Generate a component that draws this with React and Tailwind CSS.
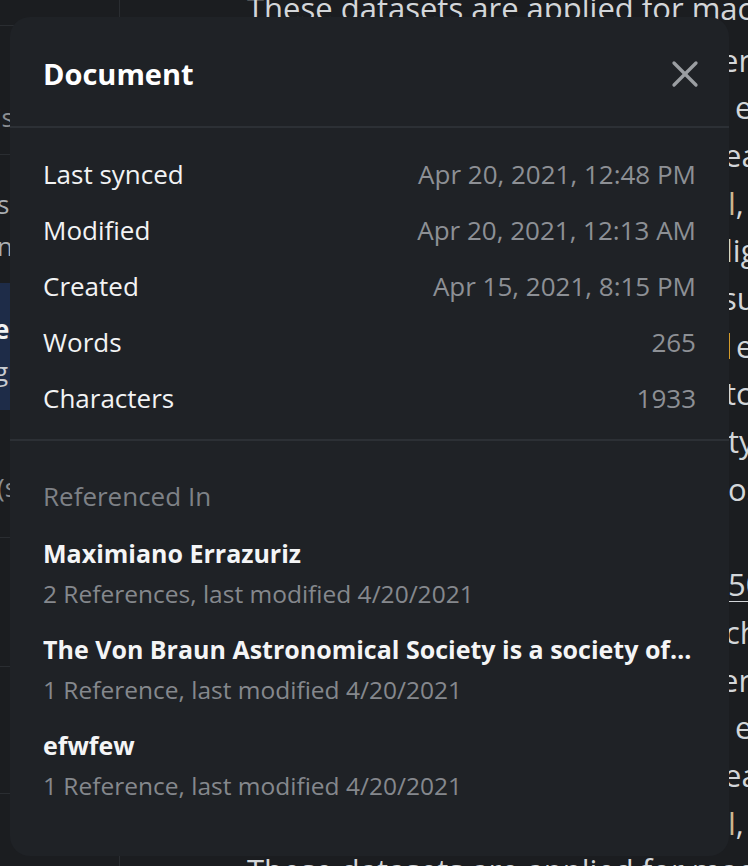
import { X } from "lucide-react";

// editor lines behind the modal: [hidden part, part that peeks out at the right edge, hidden width]
const editorLines = [
  ["learning research and have be", "en cited", 474],
  ["in peer-reviewed academic journals", " e", 480],
  ["are often described in the res", "earch", 477],
  ["<l>", "", 481],
  ["as benchmark results and are high", "light", 478],
  ["to show how the models and mea", "sures", 475],
  ["<bar>", "", 481],
  ["of the results of the community, e", "tc.", 478],
  ["with the goal to see the quali", "ty of", 481],
  ["research and also to look at the c", "ost", 481],
  ["", "", 481],
  ["<link>", "", 481],
  ["These datasets are applied for ma", "chine", 478],
  ["learning research and have be", "en cited", 474],
  ["in peer-reviewed academic journals", " e", 480],
  ["are often described in the res", "earch", 477],
  ["<l>", "", 481],
];

const rows = [
  ["Last synced", "Apr 20, 2021, 12:48 PM"],
  ["Modified", "Apr 20, 2021, 12:13 AM"],
  ["Created", "Apr 15, 2021, 8:15 PM"],
  ["Words", "265"],
  ["Characters", "1933"],
];

const references = [
  { title: "Maximiano Errazuriz", meta: "2 References, last modified 4/20/2021" },
  {
    title: "The Von Braun Astronomical Society is a society of amateur astronomers",
    meta: "1 Reference, last modified 4/20/2021",
  },
  { title: "efwfew", meta: "1 Reference, last modified 4/20/2021" },
];

function EditorLine({ hidden, tail, width }) {
  let end = <span className="whitespace-pre">{tail}</span>;
  if (hidden === "<l>") {
    hidden = "datasets for the study of the mode";
    end = (
      <span>
        <span className="text-[#cdb68e]">l</span>, and
      </span>
    );
  } else if (hidden === "<bar>") {
    hidden = "and the data that is used with the";
    end = (
      <span className="flex items-center">
        <span className="w-[2px] h-[26px] bg-[#d39b2a] mr-[6px]" />e
      </span>
    );
  } else if (hidden === "<link>") {
    hidden = "Datasets from the year 1950 to 2021 (";
    end = <span className="underline underline-offset-[5px] decoration-1">50</span>;
  }
  return (
    <div className="h-[47.7px] flex items-center">
      <span className="shrink-0 overflow-hidden" style={{ width }}>
        {hidden}
      </span>
      {end}
    </div>
  );
}

function Background() {
  return (
    <div className="flex h-full">
      {/* sidebar */}
      <div className="w-[120px] shrink-0 overflow-hidden border-r border-[#2a2d31] bg-[#1b1d20] flex flex-col text-[26px] whitespace-nowrap">
        <div className="h-[26px] shrink-0 border-b border-[#2a2d31]" />
        <div className="h-[129px] shrink-0 border-b border-[#2a2d31] pt-[72px] text-[#8b8e92] -ml-[5px]">
          is
        </div>
        <div className="h-[128px] shrink-0 pt-[28px] leading-[42px] text-[#a9acb0] -ml-[3px]">
          <div>s</div>
          <div>n</div>
        </div>
        <div className="h-[127px] shrink-0 bg-[#1e2c48] pt-[25px] leading-[42px] -ml-[6px]">
          <div className="font-bold text-[#f2f3f5]">e</div>
          <div className="text-[#c9ccd2]">g</div>
        </div>
        <div className="h-[128px] shrink-0 border-b border-[#2a2d31] pt-[58px] text-[#8b8e92] -ml-[3px]">
          (s
        </div>
        <div className="h-[129px] shrink-0 border-b border-[#2a2d31]" />
        <div className="h-[127px] shrink-0 border-b border-[#2a2d31]" />
      </div>
      {/* editor */}
      <div className="flex-1 overflow-hidden bg-[#1b1d20] pl-[127px]">
        <div className="-mt-[20px] text-[31px] text-[#d3d6d9] whitespace-nowrap">
          <div className="h-[56px] flex items-center">These datasets are applied for machine</div>
          {editorLines.map(([hidden, tail, width], i) => (
            <EditorLine key={i} hidden={hidden} tail={tail} width={width} />
          ))}
          <div className="h-[47.7px] flex items-center">These datasets are applied for machine</div>
        </div>
      </div>
    </div>
  );
}

export default function App() {
  return (
    <div
      className="relative w-[748px] h-[866px] overflow-hidden bg-[#1b1d20]"
      style={{ fontFamily: '"Open Sans", "Noto Sans", sans-serif' }}
    >
      <Background />

      {/* Document info panel */}
      <div className="absolute left-[10px] top-[17px] w-[719px] h-[839px] rounded-[20px] bg-[#1f2226] flex flex-col">
        <div className="h-[111px] px-[33px] pt-[4px] flex items-center justify-between border-b-2 border-[#2c3035]">
          <h2 className="text-[29px] font-bold text-white">Document</h2>
          <X className="text-[#9b9ea2] w-[44px] h-[44px] mr-[-11px]" strokeWidth={1.8} />
        </div>

        <div className="px-[33px] pt-[18px] pb-[13px] border-b-2 border-[#2c3035]">
          {rows.map(([label, value]) => (
            <div key={label} className="h-[56px] flex items-center justify-between text-[26px]">
              <span className="text-[#f2f3f4]">{label}</span>
              <span className="text-[#8d9095]">{value}</span>
            </div>
          ))}
        </div>

        <div className="px-[33px] pt-[34px]">
          <div className="text-[26px] text-[#7e8186] leading-[42px]">Referenced In</div>
          <div className="mt-[15px] flex flex-col gap-[14px]">
            {references.map((ref) => (
              <div key={ref.meta + ref.title}>
                <div className="text-[25px] font-bold text-[#f4f5f6] leading-[42px] truncate">
                  {ref.title}
                </div>
                <div className="text-[24.5px] text-[#85888d] leading-[40px]">{ref.meta}</div>
              </div>
            ))}
          </div>
        </div>
      </div>
    </div>
  );
}
